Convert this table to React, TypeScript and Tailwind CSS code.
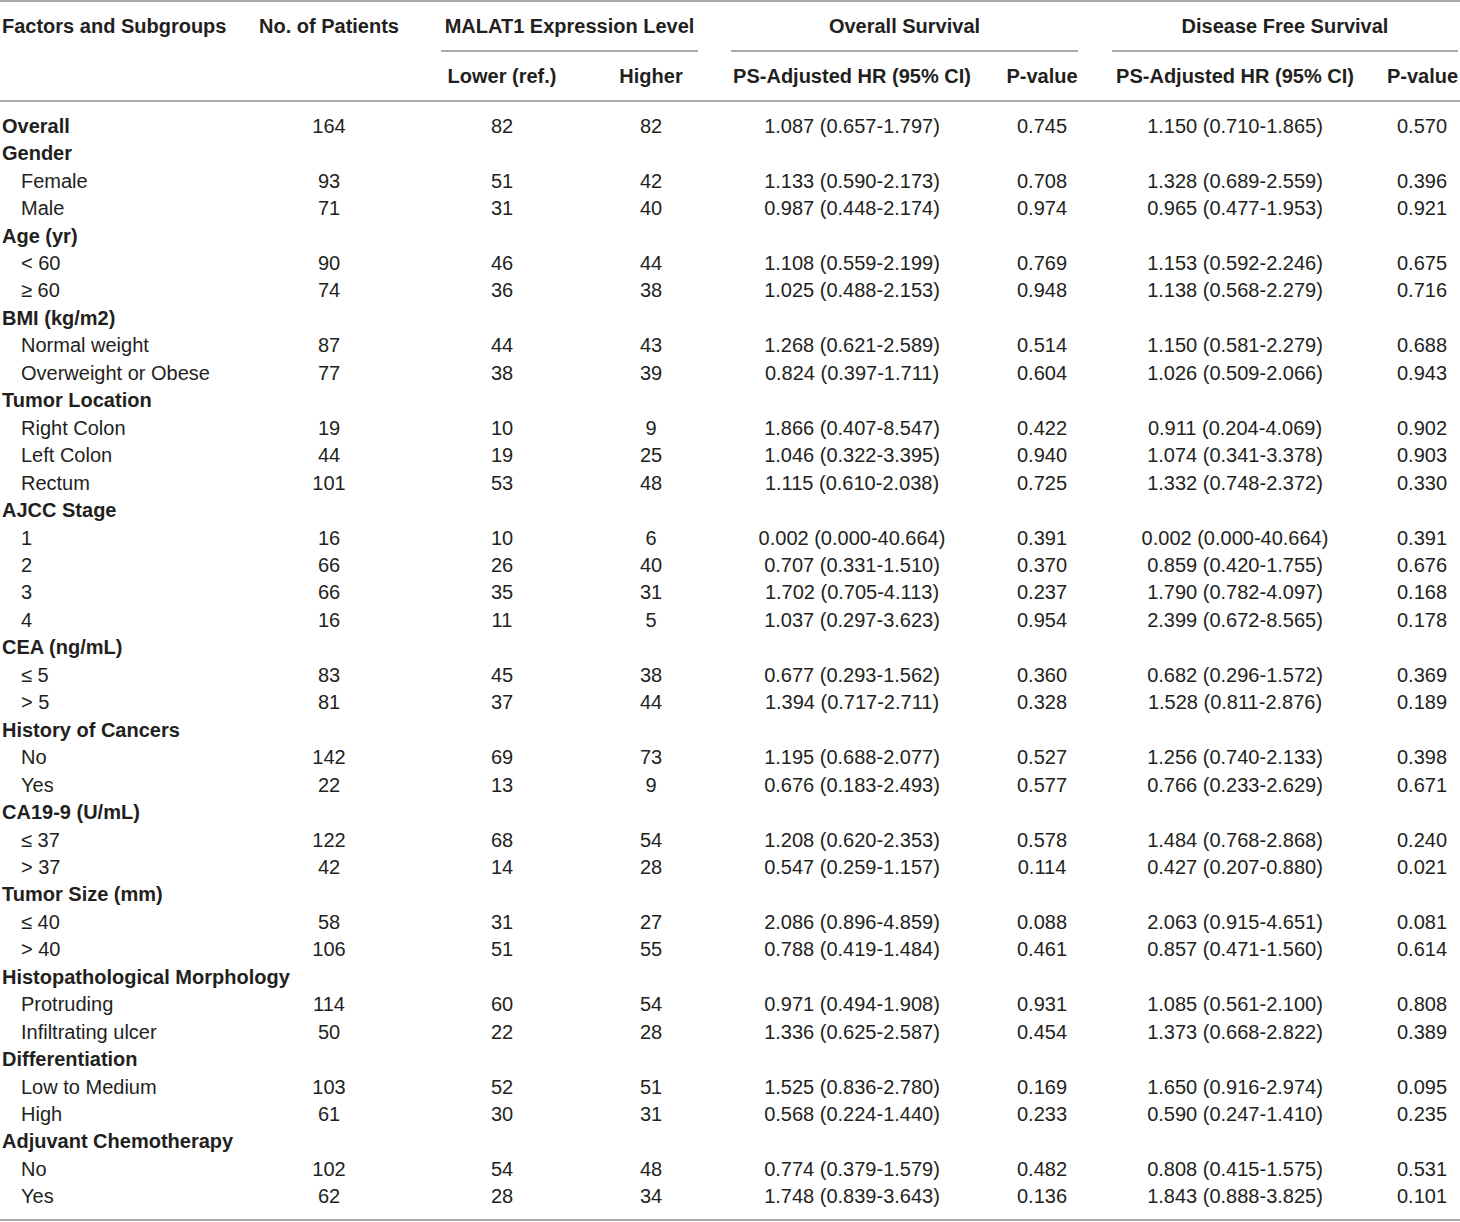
type Row = {
  label: string;
  group?: boolean;
  n?: string;
  lower?: string;
  higher?: string;
  osHr?: string;
  osP?: string;
  dfsHr?: string;
  dfsP?: string;
};

const r = (
  label: string,
  n: string,
  lower: string,
  higher: string,
  osHr: string,
  osP: string,
  dfsHr: string,
  dfsP: string,
  group = false
): Row => ({ label, n, lower, higher, osHr, osP, dfsHr, dfsP, group });

const g = (label: string): Row => ({ label, group: true });

const rows: Row[] = [
  r('Overall', '164', '82', '82', '1.087 (0.657-1.797)', '0.745', '1.150 (0.710-1.865)', '0.570', true),
  g('Gender'),
  r('Female', '93', '51', '42', '1.133 (0.590-2.173)', '0.708', '1.328 (0.689-2.559)', '0.396'),
  r('Male', '71', '31', '40', '0.987 (0.448-2.174)', '0.974', '0.965 (0.477-1.953)', '0.921'),
  g('Age (yr)'),
  r('< 60', '90', '46', '44', '1.108 (0.559-2.199)', '0.769', '1.153 (0.592-2.246)', '0.675'),
  r('≥ 60', '74', '36', '38', '1.025 (0.488-2.153)', '0.948', '1.138 (0.568-2.279)', '0.716'),
  g('BMI (kg/m2)'),
  r('Normal weight', '87', '44', '43', '1.268 (0.621-2.589)', '0.514', '1.150 (0.581-2.279)', '0.688'),
  r('Overweight or Obese', '77', '38', '39', '0.824 (0.397-1.711)', '0.604', '1.026 (0.509-2.066)', '0.943'),
  g('Tumor Location'),
  r('Right Colon', '19', '10', '9', '1.866 (0.407-8.547)', '0.422', '0.911 (0.204-4.069)', '0.902'),
  r('Left Colon', '44', '19', '25', '1.046 (0.322-3.395)', '0.940', '1.074 (0.341-3.378)', '0.903'),
  r('Rectum', '101', '53', '48', '1.115 (0.610-2.038)', '0.725', '1.332 (0.748-2.372)', '0.330'),
  g('AJCC Stage'),
  r('1', '16', '10', '6', '0.002 (0.000-40.664)', '0.391', '0.002 (0.000-40.664)', '0.391'),
  r('2', '66', '26', '40', '0.707 (0.331-1.510)', '0.370', '0.859 (0.420-1.755)', '0.676'),
  r('3', '66', '35', '31', '1.702 (0.705-4.113)', '0.237', '1.790 (0.782-4.097)', '0.168'),
  r('4', '16', '11', '5', '1.037 (0.297-3.623)', '0.954', '2.399 (0.672-8.565)', '0.178'),
  g('CEA (ng/mL)'),
  r('≤ 5', '83', '45', '38', '0.677 (0.293-1.562)', '0.360', '0.682 (0.296-1.572)', '0.369'),
  r('> 5', '81', '37', '44', '1.394 (0.717-2.711)', '0.328', '1.528 (0.811-2.876)', '0.189'),
  g('History of Cancers'),
  r('No', '142', '69', '73', '1.195 (0.688-2.077)', '0.527', '1.256 (0.740-2.133)', '0.398'),
  r('Yes', '22', '13', '9', '0.676 (0.183-2.493)', '0.577', '0.766 (0.233-2.629)', '0.671'),
  g('CA19-9 (U/mL)'),
  r('≤ 37', '122', '68', '54', '1.208 (0.620-2.353)', '0.578', '1.484 (0.768-2.868)', '0.240'),
  r('> 37', '42', '14', '28', '0.547 (0.259-1.157)', '0.114', '0.427 (0.207-0.880)', '0.021'),
  g('Tumor Size (mm)'),
  r('≤ 40', '58', '31', '27', '2.086 (0.896-4.859)', '0.088', '2.063 (0.915-4.651)', '0.081'),
  r('> 40', '106', '51', '55', '0.788 (0.419-1.484)', '0.461', '0.857 (0.471-1.560)', '0.614'),
  g('Histopathological Morphology'),
  r('Protruding', '114', '60', '54', '0.971 (0.494-1.908)', '0.931', '1.085 (0.561-2.100)', '0.808'),
  r('Infiltrating ulcer', '50', '22', '28', '1.336 (0.625-2.587)', '0.454', '1.373 (0.668-2.822)', '0.389'),
  g('Differentiation'),
  r('Low to Medium', '103', '52', '51', '1.525 (0.836-2.780)', '0.169', '1.650 (0.916-2.974)', '0.095'),
  r('High', '61', '30', '31', '0.568 (0.224-1.440)', '0.233', '0.590 (0.247-1.410)', '0.235'),
  g('Adjuvant Chemotherapy'),
  r('No', '102', '54', '48', '0.774 (0.379-1.579)', '0.482', '0.808 (0.415-1.575)', '0.531'),
  r('Yes', '62', '28', '34', '1.748 (0.839-3.643)', '0.136', '1.843 (0.888-3.825)', '0.101'),
];

const cols = 'grid grid-cols-[250px_158px_188px_110px_292px_88px_298px_76px]';

export default function App() {
  return (
    <div
      className="w-[1460px] bg-white text-[#231f20]"
      style={{ fontFamily: '"Liberation Sans", Arial, sans-serif' }}
    >
      <div className="h-[2px] bg-[#a9a9a9]" />

      {/* header */}
      <div className={`${cols} text-[20px] font-bold whitespace-nowrap`}>
        <div className="row-span-3 flex h-[48px] items-center pl-[2px]">
          Factors and Subgroups
        </div>
        <div className="row-span-3 flex h-[48px] items-center justify-center">
          No. of Patients
        </div>
        <div className="col-span-2 ml-[33px] mr-[8px] flex h-[48px] items-center justify-center">
          MALAT1 Expression Level
        </div>
        <div className="col-span-2 ml-[25px] mr-[8px] flex h-[48px] items-center justify-center">
          Overall Survival
        </div>
        <div className="col-span-2 ml-[26px] mr-[2px] flex h-[48px] items-center justify-center">
          Disease Free Survival
        </div>

        <div className="col-span-2 ml-[33px] mr-[8px] h-[2px] bg-[#a9a9a9]" />
        <div className="col-span-2 ml-[25px] mr-[8px] h-[2px] bg-[#a9a9a9]" />
        <div className="col-span-2 ml-[26px] mr-[2px] h-[2px] bg-[#a9a9a9]" />

        <div className="flex h-[48px] items-center justify-center">Lower (ref.)</div>
        <div className="flex h-[48px] items-center justify-center">Higher</div>
        <div className="flex h-[48px] items-center justify-center">PS-Adjusted HR (95% CI)</div>
        <div className="flex h-[48px] items-center justify-center">P-value</div>
        <div className="flex h-[48px] items-center justify-center">PS-Adjusted HR (95% CI)</div>
        <div className="flex h-[48px] items-center justify-center pl-[1px]">P-value</div>
      </div>

      <div className="h-[2px] bg-[#a9a9a9]" />

      {/* body */}
      <div className="pt-[10px] pb-[9px] text-[20px] whitespace-nowrap">
        {rows.map((row, i) => (
          <div key={i} className={`${cols} h-[27.46px] items-center leading-none`}>
            <div className={row.group ? 'pl-[2px] font-bold' : 'pl-[21px]'}>{row.label}</div>
            <div className="text-center">{row.n}</div>
            <div className="text-center">{row.lower}</div>
            <div className="text-center">{row.higher}</div>
            <div className="text-center">{row.osHr}</div>
            <div className="text-center">{row.osP}</div>
            <div className="text-center">{row.dfsHr}</div>
            <div className="text-center">{row.dfsP}</div>
          </div>
        ))}
      </div>

      <div className="h-[2px] bg-[#a9a9a9]" />
    </div>
  );
}
